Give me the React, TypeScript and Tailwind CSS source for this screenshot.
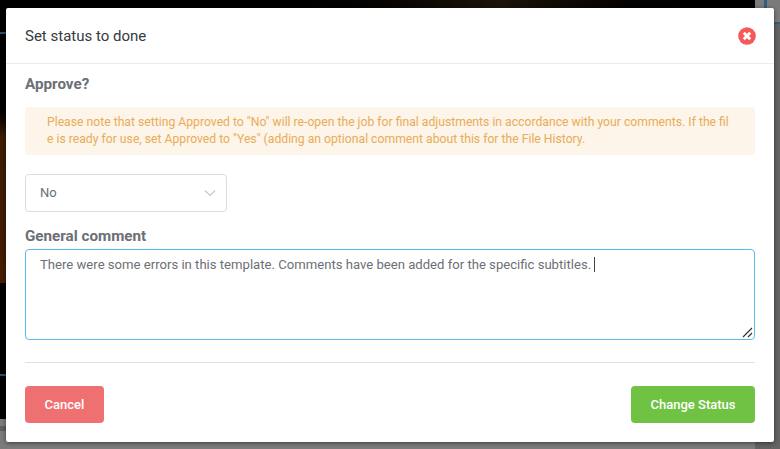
export default function App() {
  return (
    <div className="relative h-[449px] w-[780px] overflow-hidden bg-[#7b7b7b] font-['Roboto',sans-serif]">
      {/* dimmed page behind the modal */}
      <div className="absolute left-0 top-0 h-[419px] w-[755px] bg-black" />
      <div className="absolute left-0 top-[100px] h-[183px] w-[6px] bg-gradient-to-b from-[#000] via-[#3d1c00] via-[20%] to-[#451c00]" />
      <div className="absolute left-0 top-[32px] h-[2px] w-[6px] bg-[#2b5068]" />
      <div className="absolute left-0 top-[374px] h-[2px] w-[6px] bg-[#2b5068]" />
      <div className="absolute left-0 top-[426px] h-[5px] w-[6px] bg-[#5f5f5f]" />
      <div className="absolute left-[240px] top-0 h-[8px] w-[515px] bg-gradient-to-r from-[#000] via-[#1c140a] to-[#000]" />
      <div className="absolute bottom-0 left-[755px] top-[24px] w-[25px] bg-[#636363]" />
      <div className="absolute left-[755px] top-0 h-[24px] w-[25px] bg-[#7b7b7b]" />
      <div className="absolute left-[764px] top-0 h-[8px] w-[3px] bg-[#2f5f7c]" />
      <div className="absolute left-[774px] top-[22px] h-[2px] w-[6px] bg-[#2f5f7c]" />

      <div className="relative ml-[6px] mt-[8px] flex h-[434px] w-[768px] flex-col rounded-[2px] bg-white shadow-[0_1px_4px_rgba(0,0,0,0.5)]">
        <div className="flex h-[56px] items-center justify-between border-b border-[#e9ecef] pl-[19px] pr-[18px]">
          <h4 className="mt-[1px] text-[15px] text-[#343a40]">Set status to done</h4>
          <svg width="18" height="18" viewBox="0 0 18 18">
            <circle cx="9" cy="9" r="8.8" fill="#f65959" />
            <path d="M5.8 5.8l6.4 6.4M12.2 5.8l-6.4 6.4" stroke="#fff" strokeWidth="2.9" />
          </svg>
        </div>

        <div className="flex flex-col px-[19px]">
          <label className="mt-[11px] text-[15.2px] font-bold leading-[18px] text-[#6c6f75]">Approve?</label>
          <div className="mt-[14px] h-[48px] rounded-[4px] bg-[#fdf4ea] px-[22px] py-[7px] text-[12.2px] leading-[17px] text-[#e8ad57] break-all">
            Please note that setting Approved to "No" will re-open the job for final adjustments in accordance with your comments. If the file is ready for use, set Approved to "Yes" (adding an optional comment about this for the File History.
          </div>
          <div className="mt-[19px] flex h-[38px] w-[202px] items-center justify-between rounded-[4px] border border-[#dcdce6] pl-[14px] pr-[10px] text-[13px] text-[#6c6f75]">
            <span>No</span>
            <svg width="12" height="8" viewBox="0 0 12 8" fill="none" stroke="#c3c6cc" strokeWidth="1.1">
              <path d="M1 1.5l5 5 5-5" />
            </svg>
          </div>
          <label className="mt-[15px] text-[15.2px] font-bold leading-[18px] text-[#6c6f75]">General comment</label>
          <div className="relative mt-[4px] h-[91px] rounded-[4px] border border-[#5bbcec] px-[14px] py-[4px] text-[13.12px] leading-[20px] text-[#6c6f75]">
            There were some errors in this template. Comments have been added for the specific subtitles.
            <span className="ml-[3px] inline-block h-[15px] w-px translate-y-[3px] bg-[#444]" />
            <svg className="absolute bottom-[1px] right-[1px]" width="11" height="11" viewBox="0 0 11 11" stroke="#333" strokeWidth="1.2">
              <path d="M1 10L10 1M6 10l4-4" />
            </svg>
          </div>
          <div className="mt-[22px] h-px bg-[#dee2e6]" />
          <div className="mt-[23px] flex justify-between">
            <button className="h-[37px] w-[79px] rounded-[4px] bg-[#ef7070] text-[13px] font-medium text-white">Cancel</button>
            <button className="h-[37px] w-[124px] rounded-[4px] bg-[#70c243] text-[13px] font-medium text-white">Change Status</button>
          </div>
        </div>
      </div>
    </div>
  );
}
